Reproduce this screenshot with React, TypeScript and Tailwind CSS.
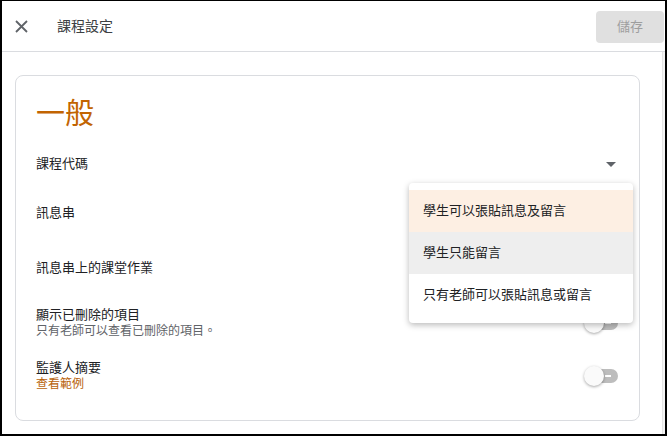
import React from "react";

const font = "font-['Roboto','Noto_Sans_CJK_TC',sans-serif]";

function Toggle() {
  return (
    <div className="relative w-[34px] h-5 shrink-0">
      <div className="absolute right-0 top-[3px] w-[28px] h-[14px] rounded-full bg-[#bdbdbd]">
        <div className="absolute right-[7px] top-[6px] w-[6px] h-[1.5px] bg-white" />
      </div>
      <div className="absolute left-0 top-0 w-5 h-5 rounded-full bg-[#fafafa] shadow-[0_1px_3px_rgba(0,0,0,0.35)]" />
    </div>
  );
}

const options = [
  { label: "學生可以張貼訊息及留言", bg: "bg-[#fdefe3]" },
  { label: "學生只能留言", bg: "bg-[#eeeeee]" },
  { label: "只有老師可以張貼訊息或留言", bg: "bg-white" },
];

export default function App() {
  return (
    <div className={`w-[667px] h-[436px] bg-white border-t border-l-2 border-r-2 border-b-2 border-black flex flex-col overflow-hidden ${font}`}>
      {/* header */}
      <header className="h-[51px] shrink-0 border-b border-[#dadce0] flex items-center">
        <svg className="ml-[13px] w-[13px] h-[13px]" viewBox="0 0 13 13" fill="none">
          <path d="M1 1L12 12M12 1L1 12" stroke="#5f6368" strokeWidth="1.8" />
        </svg>
        <h1 className="ml-[29px] text-[14px] text-[#3c4043]">課程設定</h1>
        <button
          disabled
          className="ml-auto mr-[1px] mt-[1px] w-[68px] h-8 rounded bg-[#e0e0e0] text-[13px] text-[#9e9e9e]"
        >
          儲存
        </button>
      </header>

      <div className="flex-1 flex">
        <main className="flex-1 pl-[13px] pr-[22px] pt-[23px]">
          <section className="relative rounded-lg border border-[#dadce0] pl-5 pr-[21px] pb-[28px]">
            <div className="h-[76px] flex items-center">
              <h2 className="text-[29px] leading-none text-[#c26401]">一般</h2>
            </div>

            <div className="h-6 flex items-center justify-between text-[13px] text-[#202124]">
              <span>課程代碼</span>
              <svg className="mr-[2px] w-[10px] h-[5px]" viewBox="0 0 10 5">
                <path d="M0 0H10L5 5Z" fill="#5f6368" />
              </svg>
            </div>

            <div className="h-[74px] flex items-center text-[13px] text-[#202124]">
              <span>訊息串</span>
            </div>

            <div className="h-9 flex items-center text-[13px] text-[#202124]">
              <span>訊息串上的課堂作業</span>
            </div>

            <div className="mt-5 flex items-center justify-between">
              <div className="flex flex-col">
                <span className="h-[17px] leading-[17px] text-[13px] text-[#202124]">顯示已刪除的項目</span>
                <span className="h-[17px] leading-[17px] text-[12px] text-[#5f6368]">只有老師可以查看已刪除的項目。</span>
              </div>
              <Toggle />
            </div>

            <div className="mt-5 flex items-center justify-between">
              <div className="flex flex-col">
                <span className="h-4 leading-4 text-[13px] text-[#202124]">監護人摘要</span>
                <a className="h-4 leading-4 text-[12px] text-[#b8620a]">查看範例</a>
              </div>
              <Toggle />
            </div>

            {/* open select menu */}
            <ul className="absolute left-[393px] top-[107px] w-[224px] py-[7px] bg-white rounded shadow-[0_2px_6px_rgba(0,0,0,0.28)]">
              {options.map((o) => (
                <li
                  key={o.label}
                  className={`h-[42px] flex items-center pl-[14px] text-[13px] text-[#202124] ${o.bg}`}
                >
                  {o.label}
                </li>
              ))}
            </ul>
          </section>
        </main>
        <div className="w-[3px] bg-[#f3f3f3] border-l border-[#e3e3e3]" />
      </div>
    </div>
  );
}
